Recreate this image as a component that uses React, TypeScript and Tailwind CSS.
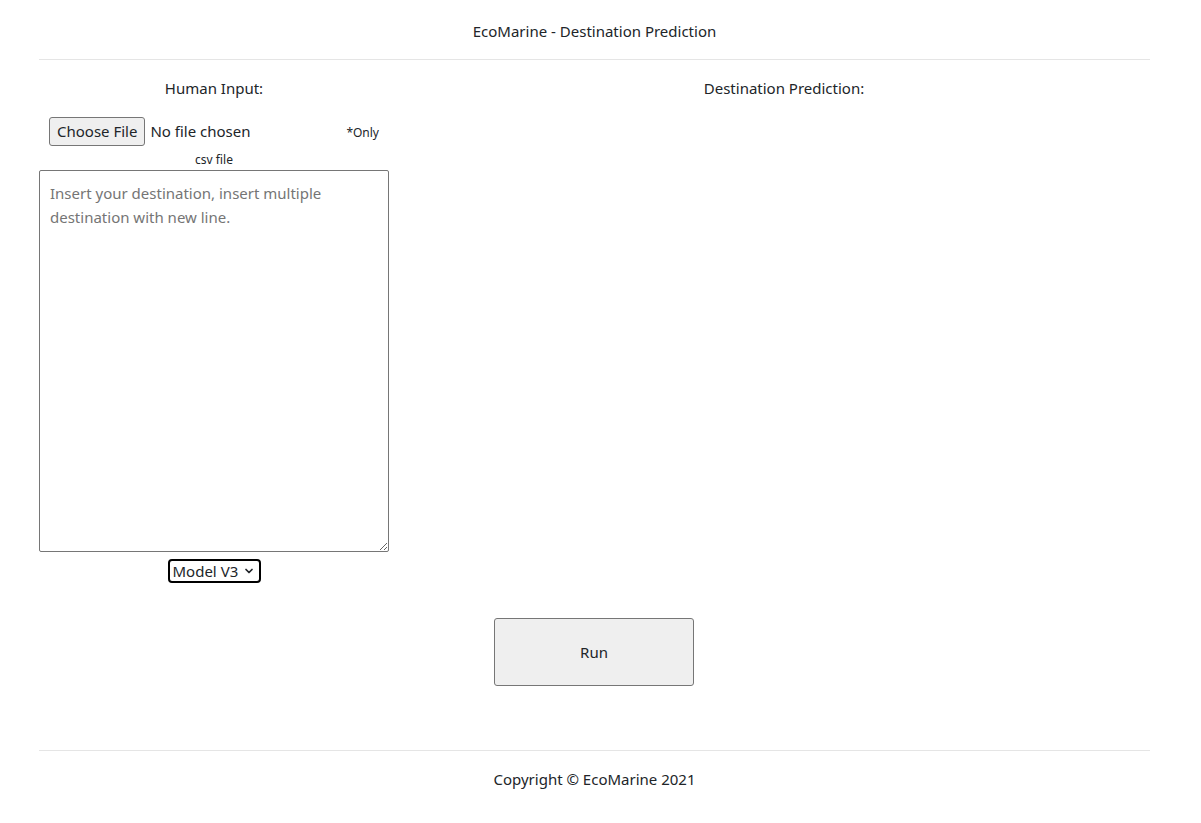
import { ChevronDown } from 'lucide-react';

export default function App() {
  return (
    <div className="min-h-[823px] bg-white text-[#212529] font-['Noto_Sans','Open_Sans',sans-serif]">
      <div className="mx-[39px] w-[1111px]">
        <header className="h-[60px] pt-[4px] border-b border-[#e5e5e5] flex items-center justify-center text-[15px]">
          EcoMarine - Destination Prediction
        </header>

        <div className="flex">
          <div className="w-[350px] flex flex-col items-center">
            <p className="mt-[17px] text-[15px] leading-[22px]">Human Input:</p>
            <div className="mt-[18px] w-full flex items-center pl-[10px]">
              <button className="h-[29px] px-[7px] bg-[#efefef] border border-[#767676] rounded-[3px] text-[15px] leading-none">
                Choose File
              </button>
              <span className="ml-[5px] text-[15px]">No file chosen</span>
              <span className="ml-auto mr-[10px] mt-[3px] text-[12px]">*Only</span>
            </div>
            <p className="mt-[6px] text-[12px] leading-[16px]">csv file</p>
            <textarea
              className="mt-[2px] w-[350px] h-[382px] border border-[#767676] rounded-[2px] px-[10px] py-[10px] text-[15px] leading-[24px] placeholder:text-[#757575] outline-none"
              placeholder="Insert your destination, insert multiple destination with new line."
            />
            <div className="mt-[7px] h-[24px] w-[93px] border-2 border-black rounded-[4px] flex items-center justify-between pl-[3px] pr-[4px] text-[15px]">
              <span>Model V3</span>
              <ChevronDown className="w-[12px] h-[12px]" strokeWidth={3.5} />
            </div>
          </div>
          <div className="ml-[29px] flex-1 flex justify-center">
            <p className="mt-[17px] text-[15px] leading-[22px]">Destination Prediction:</p>
          </div>
        </div>

        <div className="mt-[35px] flex">
          <button className="ml-[455px] w-[200px] h-[68px] bg-[#efefef] border border-[#767676] rounded-[3px] text-[15px]">
            Run
          </button>
        </div>

        <footer className="mt-[64px] h-[60px] pb-[2px] border-t border-[#e5e5e5] flex items-center justify-center text-[15px]">
          Copyright © EcoMarine 2021
        </footer>
      </div>
    </div>
  );
}
